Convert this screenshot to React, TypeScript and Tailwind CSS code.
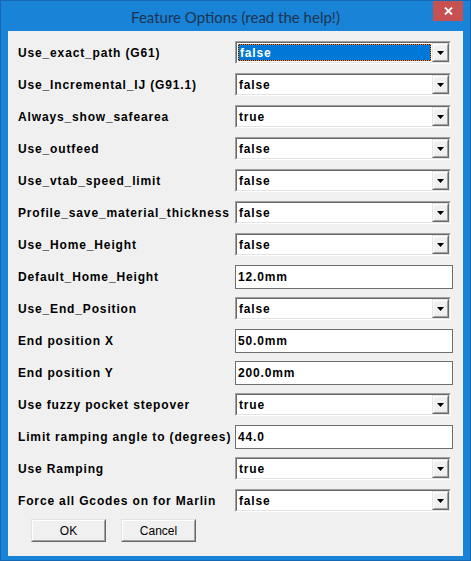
import React from 'react';

type Row = { label: string; value: string; kind: 'combo' | 'text'; selected?: boolean };

const rows: Row[] = [
  { label: 'Use_exact_path (G61)', value: 'false', kind: 'combo', selected: true },
  { label: 'Use_Incremental_IJ (G91.1)', value: 'false', kind: 'combo' },
  { label: 'Always_show_safearea', value: 'true', kind: 'combo' },
  { label: 'Use_outfeed', value: 'false', kind: 'combo' },
  { label: 'Use_vtab_speed_limit', value: 'false', kind: 'combo' },
  { label: 'Profile_save_material_thickness', value: 'false', kind: 'combo' },
  { label: 'Use_Home_Height', value: 'false', kind: 'combo' },
  { label: 'Default_Home_Height', value: '12.0mm', kind: 'text' },
  { label: 'Use_End_Position', value: 'false', kind: 'combo' },
  { label: 'End position X', value: '50.0mm', kind: 'text' },
  { label: 'End position Y', value: '200.0mm', kind: 'text' },
  { label: 'Use fuzzy pocket stepover', value: 'true', kind: 'combo' },
  { label: 'Limit ramping angle to (degrees)', value: '44.0', kind: 'text' },
  { label: 'Use Ramping', value: 'true', kind: 'combo' },
  { label: 'Force all Gcodes on for Marlin', value: 'false', kind: 'combo' },
];

// classic raised 3D button for the combo arrow
const DropButton = () => (
  <div className="w-[17px] h-full border border-t-[#e3e3e3] border-l-[#e3e3e3] border-b-[#696969] border-r-[#696969]">
    <div className="h-full border border-t-white border-l-white border-b-[#a0a0a0] border-r-[#a0a0a0] bg-[#f0f0f0] flex items-center justify-center">
      <svg width="7" height="4" viewBox="0 0 7 4">
        <polygon points="0,0 7,0 3.5,4" fill="#000" />
      </svg>
    </div>
  </div>
);

const Combo = ({ value, selected }: { value: string; selected?: boolean }) => (
  <div className="w-[216px] h-[23px] border border-t-[#a0a0a0] border-l-[#a0a0a0] border-b-white border-r-white">
    <div className="h-full flex bg-white border border-t-[#696969] border-l-[#696969] border-b-[#e3e3e3] border-r-[#e3e3e3]">
      <div className="flex-1 min-w-0 flex items-stretch">
        {selected ? (
          <div className="flex-1 m-px bg-[#1a1a1a] border border-dotted border-[#ff8a2a]">
            <div className="h-full bg-[#0078d7] text-white flex items-center pl-px">{value}</div>
          </div>
        ) : (
          <div className="flex items-center pl-[2px]">{value}</div>
        )}
      </div>
      <DropButton />
    </div>
  </div>
);

const TextBox = ({ value }: { value: string }) => (
  <div className="w-[218px] h-[24px] border border-[#6e6e6e] bg-white flex items-center pl-[2px]">{value}</div>
);

const WinButton = ({ children }: { children: React.ReactNode }) => (
  <button className="w-[75px] h-[23px] border border-t-[#e3e3e3] border-l-[#e3e3e3] border-b-[#696969] border-r-[#696969]">
    <div className="h-full border border-t-white border-l-white border-b-[#a0a0a0] border-r-[#a0a0a0] bg-[#f0f0f0] flex items-center justify-center text-[12px] font-normal tracking-normal text-black">
      {children}
    </div>
  </button>
);

export default function App() {
  return (
    <div className="w-[471px] h-[561px] bg-[#1883d7] border border-[#1569b4] flex flex-col font-['Liberation_Sans',Arial,sans-serif]">
      {/* Title bar */}
      <div className="relative h-[30px] flex items-center justify-center">
        <span className="font-['Lato','Noto_Sans',sans-serif] text-[15px] text-[#1f3350] pt-[2px]">
          Feature Options (read the help!)
        </span>
        <div className="absolute top-0 right-[7px] w-[30px] h-[20px] bg-[#c75050] flex items-center justify-center">
          <svg width="9" height="8" viewBox="0 0 9 8">
            <path d="M1 0.5 L8 7.5 M8 0.5 L1 7.5" stroke="#fff" strokeWidth="1.8" />
          </svg>
        </div>
      </div>

      {/* Client area */}
      <div className="mx-[7px] h-[525px] bg-[#f0f0f0] pt-[10px] pl-[10px] text-[12px] font-bold tracking-[0.85px] text-black">
        {rows.map(r => (
          <div key={r.label} className="h-[32px] flex items-start">
            <div className="w-[217px] h-[23px] flex items-center whitespace-nowrap">{r.label}</div>
            {r.kind === 'combo' ? <Combo value={r.value} selected={r.selected} /> : <TextBox value={r.value} />}
          </div>
        ))}
        <div className="-mt-[2px] pl-[13px] flex gap-[15px]">
          <WinButton>OK</WinButton>
          <WinButton>Cancel</WinButton>
        </div>
      </div>
    </div>
  );
}
